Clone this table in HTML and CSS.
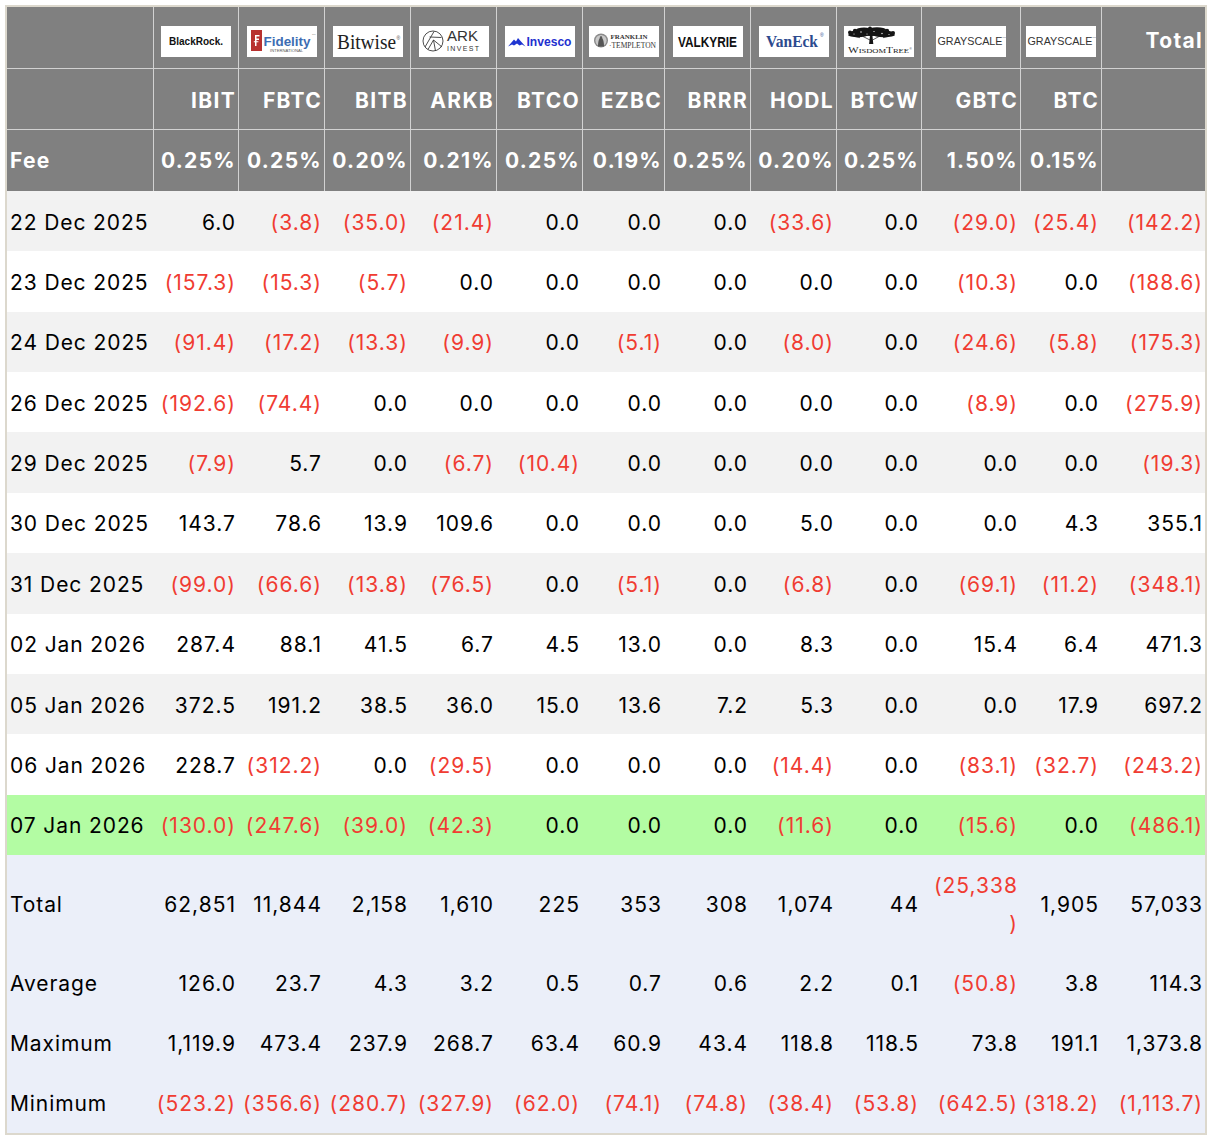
FILE: index.html
```html
<!DOCTYPE html>
<html lang="en">
<head>
<meta charset="utf-8">
<title>Bitcoin ETF Flows</title>
<link rel="stylesheet" href="styles.css">
</head>
<body>
<table class="flows">
  <colgroup>
    <col class="c-date"><col class="c85"><col class="c86"><col class="c86"><col class="c86"><col class="c86"><col class="c82"><col class="c86"><col class="c86"><col class="c85"><col class="c99"><col class="c81"><col class="c104">
  </colgroup>
  <thead>
    <tr class="h1">
      <th class="first"></th>
      <th class="logo-cell"><svg class="logo" viewBox="0 0 70 31"><rect width="70" height="31" fill="#fff"/><text x="8" y="19" font-family="Liberation Sans, Arial, sans-serif" font-weight="700" font-size="11" fill="#111" textLength="54" lengthAdjust="spacingAndGlyphs">BlackRock.</text></svg></th>
      <th class="logo-cell"><svg class="logo" viewBox="0 0 70 31"><rect width="70" height="31" fill="#fff"/><rect x="4" y="4" width="11" height="21" fill="#b8312f"/><path d="M8 9h4.5v1.4H9.5v2.2h2.5V14H9.5v6H8z M6.8 15.2h4.6v1.1H6.8z" fill="#fff"/><text x="16.5" y="19.5" font-family="Liberation Sans, Arial, sans-serif" font-weight="700" font-size="13" fill="#3d6db3" textLength="47" lengthAdjust="spacingAndGlyphs">Fidelity</text><text x="23" y="25.5" font-family="Liberation Sans, Arial, sans-serif" font-size="2.6" fill="#555" textLength="33" lengthAdjust="spacingAndGlyphs">INTERNATIONAL</text><text x="65" y="9" font-family="Liberation Sans, Arial, sans-serif" font-size="2.5" fill="#777">TM</text></svg></th>
      <th class="logo-cell"><svg class="logo" viewBox="0 0 70 31"><rect width="70" height="31" fill="#fff"/><text x="4" y="23" font-family="Liberation Serif, Times New Roman, serif" font-size="20" fill="#222" textLength="59" lengthAdjust="spacingAndGlyphs">Bitwise</text><text x="63.5" y="14" font-family="Liberation Sans, Arial, sans-serif" font-size="5" fill="#444">®</text></svg></th>
      <th class="logo-cell"><svg class="logo" viewBox="0 0 70 31"><rect width="70" height="31" fill="#fff"/><g fill="none" stroke="#3a3a3a" stroke-width="0.9"><circle cx="14" cy="15" r="10"/><path d="M6 21L15 5.5M9 23.5L14.5 14L23 21M14.5 14L16.5 25M10.5 11L22.5 11.5"/></g><text x="28" y="15" font-family="Liberation Sans, Arial, sans-serif" font-size="14.5" fill="#333" textLength="31" lengthAdjust="spacingAndGlyphs">ARK</text><text x="28" y="25" font-family="Liberation Sans, Arial, sans-serif" font-size="7" fill="#333" textLength="32" lengthAdjust="spacing">INVEST</text></svg></th>
      <th class="logo-cell"><svg class="logo" viewBox="0 0 70 31"><rect width="70" height="31" fill="#fff"/><path d="M3 20.5L9 13.5L11 15.5L13 12L16 15.5L20.5 20.5L17 18.5L14.5 19.5L12 17.5L9 19.5L7 18.5Z" fill="#1f35d1"/><text x="21.5" y="20" font-family="Liberation Sans, Arial, sans-serif" font-weight="700" font-size="12.5" fill="#1f30cf" textLength="45" lengthAdjust="spacingAndGlyphs">Invesco</text></svg></th>
      <th class="logo-cell"><svg class="logo" viewBox="0 0 70 31"><rect width="70" height="31" fill="#fff"/><circle cx="12" cy="14.5" r="7" fill="#8a8a8a"/><circle cx="12" cy="14.5" r="5.6" fill="#c9c9c9"/><path d="M9 20.5Q9 15 10.5 12.5Q12 10 13.5 12.5Q15 15 15 20.5Z M10.5 11.5Q12 8.5 13.5 11.5Z" fill="#555"/><text x="21.5" y="13" font-family="Liberation Serif, Times New Roman, serif" font-weight="700" font-size="6.5" fill="#333" textLength="37" lengthAdjust="spacingAndGlyphs">FRANKLIN</text><text x="20" y="21.5" font-family="Liberation Serif, Times New Roman, serif" font-size="7.5" fill="#333" textLength="47" lengthAdjust="spacingAndGlyphs">·TEMPLETON</text></svg></th>
      <th class="logo-cell"><svg class="logo" viewBox="0 0 70 31"><rect width="70" height="31" fill="#fff"/><text x="5" y="21" font-family="Liberation Sans, Arial, sans-serif" font-weight="700" font-size="15" fill="#111" textLength="59" lengthAdjust="spacingAndGlyphs">VALKYRIE</text></svg></th>
      <th class="logo-cell"><svg class="logo" viewBox="0 0 70 31"><rect width="70" height="31" fill="#fff"/><text x="7" y="20.5" font-family="Liberation Serif, Times New Roman, serif" font-weight="700" font-size="16.5" fill="#2c4a8e" textLength="52" lengthAdjust="spacingAndGlyphs">VanEck</text><text x="61" y="11" font-family="Liberation Sans, Arial, sans-serif" font-size="5" fill="#2c4a8e">®</text></svg></th>
      <th class="logo-cell"><svg class="logo" viewBox="0 0 70 31"><rect width="70" height="31" fill="#fff"/><g fill="#151515"><ellipse cx="27" cy="6.8" rx="22" ry="3.2"/><ellipse cx="14" cy="9" rx="10" ry="2.2"/><ellipse cx="40" cy="9" rx="11" ry="2.2"/><ellipse cx="20" cy="4" rx="8" ry="2.4"/><ellipse cx="33" cy="3.6" rx="9" ry="2.4"/><circle cx="26" cy="2.6" r="2"/><circle cx="6" cy="6.5" r="2"/><circle cx="49" cy="7" r="2"/><circle cx="43" cy="5" r="2.2"/><circle cx="11" cy="5" r="2.2"/><path d="M26 9.5h2.4l0.9 8.5h-4.2z"/></g><g fill="#fff"><circle cx="17" cy="6" r="0.7"/><circle cx="30" cy="5.5" r="0.6"/><circle cx="38" cy="7.5" r="0.7"/><circle cx="23" cy="8" r="0.5"/><circle cx="10" cy="8" r="0.5"/><circle cx="45" cy="8.5" r="0.5"/></g><g stroke="#151515" stroke-width="0.7" fill="none"><path d="M19 10.5l7 3.5M35 10.5l-6.5 3.5M11 10.5l5 1.2M44 10.5l-5 1.2"/></g><text x="4" y="27" font-family="Liberation Serif, Times New Roman, serif" font-size="6" fill="#222" textLength="61" lengthAdjust="spacingAndGlyphs"><tspan font-size="8">W</tspan>ISDOM<tspan font-size="8">T</tspan>REE</text><text x="65.5" y="23.5" font-family="Liberation Sans, Arial, sans-serif" font-size="3" fill="#222">®</text></svg></th>
      <th class="logo-cell"><svg class="logo" viewBox="0 0 70 31"><rect width="70" height="31" fill="#fff"/><text x="1.5" y="18.5" font-family="Liberation Sans, Arial, sans-serif" font-size="10.5" fill="#333" textLength="65" lengthAdjust="spacingAndGlyphs">GRAYSCALE</text><text x="66.6" y="12" font-family="Liberation Sans, Arial, sans-serif" font-size="2.2" fill="#555">TM</text></svg></th>
      <th class="logo-cell"><svg class="logo" viewBox="0 0 70 31"><rect width="70" height="31" fill="#fff"/><text x="1.5" y="18.5" font-family="Liberation Sans, Arial, sans-serif" font-size="10.5" fill="#333" textLength="65" lengthAdjust="spacingAndGlyphs">GRAYSCALE</text><text x="66.6" y="12" font-family="Liberation Sans, Arial, sans-serif" font-size="2.2" fill="#555">TM</text></svg></th>
      <th class="total-head">Total</th>
    </tr>
    <tr class="h2">
      <th class="first"></th>
      <th>IBIT</th><th>FBTC</th><th>BITB</th><th>ARKB</th><th>BTCO</th><th>EZBC</th><th>BRRR</th><th>HODL</th><th>BTCW</th><th>GBTC</th><th>BTC</th><th></th>
    </tr>
    <tr class="h3">
      <th class="first fee">Fee</th>
      <th>0.25%</th><th>0.25%</th><th>0.20%</th><th>0.21%</th><th>0.25%</th><th>0.19%</th><th>0.25%</th><th>0.20%</th><th>0.25%</th><th>1.50%</th><th>0.15%</th><th></th>
    </tr>
  </thead>
  <tbody>
    <tr class="row alt"><td>22 Dec 2025</td><td>6.0</td><td class="neg">(3.8)</td><td class="neg">(35.0)</td><td class="neg">(21.4)</td><td>0.0</td><td>0.0</td><td>0.0</td><td class="neg">(33.6)</td><td>0.0</td><td class="neg">(29.0)</td><td class="neg">(25.4)</td><td class="neg">(142.2)</td></tr>
    <tr class="row"><td>23 Dec 2025</td><td class="neg">(157.3)</td><td class="neg">(15.3)</td><td class="neg">(5.7)</td><td>0.0</td><td>0.0</td><td>0.0</td><td>0.0</td><td>0.0</td><td>0.0</td><td class="neg">(10.3)</td><td>0.0</td><td class="neg">(188.6)</td></tr>
    <tr class="row alt"><td>24 Dec 2025</td><td class="neg">(91.4)</td><td class="neg">(17.2)</td><td class="neg">(13.3)</td><td class="neg">(9.9)</td><td>0.0</td><td class="neg">(5.1)</td><td>0.0</td><td class="neg">(8.0)</td><td>0.0</td><td class="neg">(24.6)</td><td class="neg">(5.8)</td><td class="neg">(175.3)</td></tr>
    <tr class="row"><td>26 Dec 2025</td><td class="neg">(192.6)</td><td class="neg">(74.4)</td><td>0.0</td><td>0.0</td><td>0.0</td><td>0.0</td><td>0.0</td><td>0.0</td><td>0.0</td><td class="neg">(8.9)</td><td>0.0</td><td class="neg">(275.9)</td></tr>
    <tr class="row alt"><td>29 Dec 2025</td><td class="neg">(7.9)</td><td>5.7</td><td>0.0</td><td class="neg">(6.7)</td><td class="neg">(10.4)</td><td>0.0</td><td>0.0</td><td>0.0</td><td>0.0</td><td>0.0</td><td>0.0</td><td class="neg">(19.3)</td></tr>
    <tr class="row"><td>30 Dec 2025</td><td>143.7</td><td>78.6</td><td>13.9</td><td>109.6</td><td>0.0</td><td>0.0</td><td>0.0</td><td>5.0</td><td>0.0</td><td>0.0</td><td>4.3</td><td>355.1</td></tr>
    <tr class="row alt"><td>31 Dec 2025</td><td class="neg">(99.0)</td><td class="neg">(66.6)</td><td class="neg">(13.8)</td><td class="neg">(76.5)</td><td>0.0</td><td class="neg">(5.1)</td><td>0.0</td><td class="neg">(6.8)</td><td>0.0</td><td class="neg">(69.1)</td><td class="neg">(11.2)</td><td class="neg">(348.1)</td></tr>
    <tr class="row"><td>02 Jan 2026</td><td>287.4</td><td>88.1</td><td>41.5</td><td>6.7</td><td>4.5</td><td>13.0</td><td>0.0</td><td>8.3</td><td>0.0</td><td>15.4</td><td>6.4</td><td>471.3</td></tr>
    <tr class="row alt"><td>05 Jan 2026</td><td>372.5</td><td>191.2</td><td>38.5</td><td>36.0</td><td>15.0</td><td>13.6</td><td>7.2</td><td>5.3</td><td>0.0</td><td>0.0</td><td>17.9</td><td>697.2</td></tr>
    <tr class="row"><td>06 Jan 2026</td><td>228.7</td><td class="neg">(312.2)</td><td>0.0</td><td class="neg">(29.5)</td><td>0.0</td><td>0.0</td><td>0.0</td><td class="neg">(14.4)</td><td>0.0</td><td class="neg">(83.1)</td><td class="neg">(32.7)</td><td class="neg">(243.2)</td></tr>
    <tr class="row today"><td>07 Jan 2026</td><td class="neg">(130.0)</td><td class="neg">(247.6)</td><td class="neg">(39.0)</td><td class="neg">(42.3)</td><td>0.0</td><td>0.0</td><td>0.0</td><td class="neg">(11.6)</td><td>0.0</td><td class="neg">(15.6)</td><td>0.0</td><td class="neg">(486.1)</td></tr>
  </tbody>
  <tfoot>
    <tr class="sum tall"><td>Total</td><td>62,851</td><td>11,844</td><td>2,158</td><td>1,610</td><td>225</td><td>353</td><td>308</td><td>1,074</td><td>44</td><td class="neg">(25,338<br>)</td><td>1,905</td><td>57,033</td></tr>
    <tr class="sum"><td>Average</td><td>126.0</td><td>23.7</td><td>4.3</td><td>3.2</td><td>0.5</td><td>0.7</td><td>0.6</td><td>2.2</td><td>0.1</td><td class="neg">(50.8)</td><td>3.8</td><td>114.3</td></tr>
    <tr class="sum"><td>Maximum</td><td>1,119.9</td><td>473.4</td><td>237.9</td><td>268.7</td><td>63.4</td><td>60.9</td><td>43.4</td><td>118.8</td><td>118.5</td><td>73.8</td><td>191.1</td><td>1,373.8</td></tr>
    <tr class="sum"><td>Minimum</td><td class="neg">(523.2)</td><td class="neg">(356.6)</td><td class="neg">(280.7)</td><td class="neg">(327.9)</td><td class="neg">(62.0)</td><td class="neg">(74.1)</td><td class="neg">(74.8)</td><td class="neg">(38.4)</td><td class="neg">(53.8)</td><td class="neg">(642.5)</td><td class="neg">(318.2)</td><td class="neg">(1,113.7)</td></tr>
  </tfoot>
</table>
</body>
</html>
```

FILE: styles.css
```css
html, body {
  margin: 0;
  background: #ffffff;
}

body {
  padding: 5px;
  font-family: Inter, "Noto Sans", "Liberation Sans", sans-serif;
  color: #000;
}

.flows {
  box-sizing: border-box;
  width: 1202px;
  table-layout: fixed;
  border-collapse: separate;
  border-spacing: 0;
  border: 2px solid #dcd8cd;
}

.c-date { width: 146px; }
.c85 { width: 85px; }
.c86 { width: 86px; }
.c82 { width: 82px; }
.c99 { width: 99px; }
.c81 { width: 81px; }
.c104 { width: 104px; }

.flows th,
.flows td {
  box-sizing: border-box;
  padding: 3px 2px 0 3px;
  font-size: 21px;
  line-height: 38px;
  letter-spacing: 1px;
  text-align: right;
  vertical-align: middle;
  white-space: nowrap;
}

/* header */
.flows thead th {
  background: #808080;
  color: #ffffff;
  font-weight: 700;
  letter-spacing: 1.3px;
  border-left: 1px solid #d2d2d2;
}

.flows thead th.first {
  border-left: 0;
  text-align: left;
}

.h1 th,
.h2 th {
  border-bottom: 1px solid #d2d2d2;
}

.h1 th { height: 62px; }
.h2 th { height: 61px; padding-top: 4px; }
.h3 th { height: 61px; padding-top: 1px; }

.h1 th.total-head {
  padding-top: 6px;
}

.h1 th.logo-cell {
  text-align: center;
  padding: 7px 0 0;
  line-height: 0;
}

.logo {
  display: inline-block;
  width: 70px;
  height: 31px;
  font-weight: 400;
  letter-spacing: 0;
}

.fee {
  padding-left: 3px;
}

/* body */
.flows tbody td:first-child,
.flows tfoot td:first-child {
  text-align: left;
  letter-spacing: 0.9px;
}

.row td {
  height: 60.36px;
  background: #ffffff;
}

.row.alt td {
  background: #f2f2f2;
}

.row.today td {
  background: #b3fca3;
}

.sum td {
  height: 60px;
  background: #ebeff9;
}

.sum.tall td {
  height: 98px;
}

.neg {
  color: #f03c32;
}
```
